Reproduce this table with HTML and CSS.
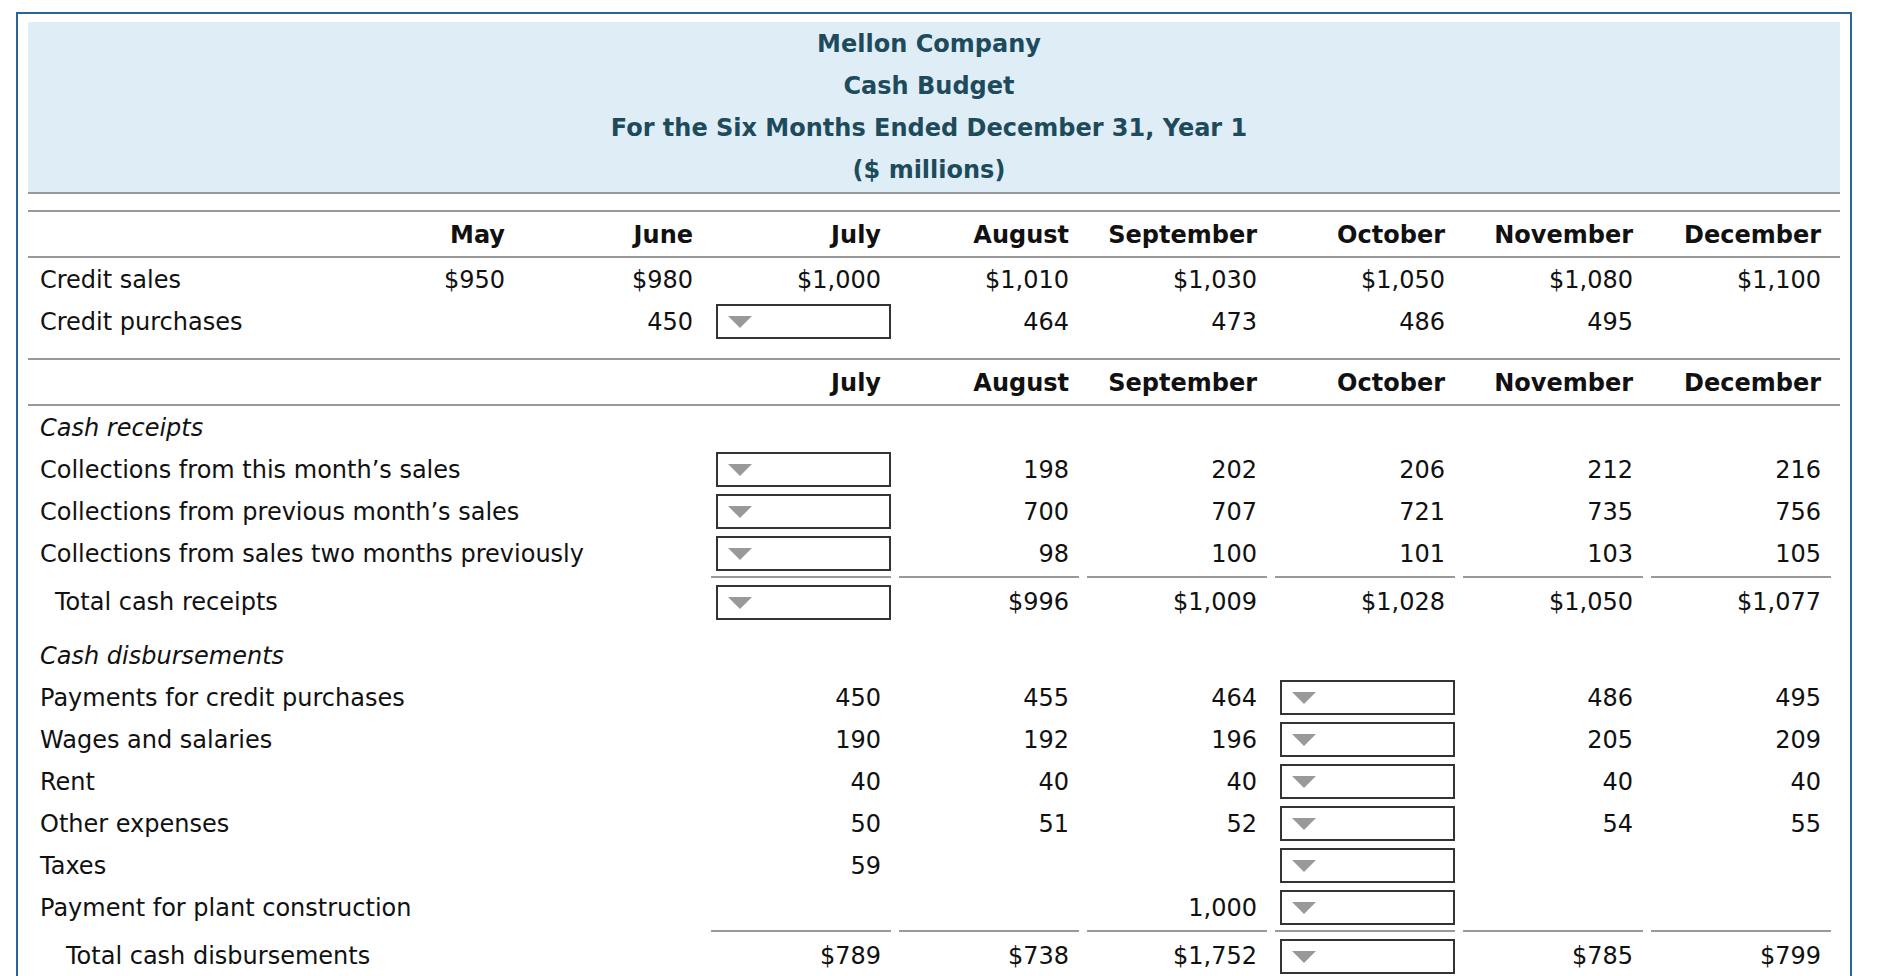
FILE: index.html
```html
<!DOCTYPE html>
<html lang="en">
<head>
<meta charset="utf-8">
<title>Mellon Company Cash Budget</title>
<link rel="stylesheet" href="styles.css">
</head>
<body>
<div class="sheet">
  <div class="title">
    <div>Mellon Company</div>
    <div>Cash Budget</div>
    <div>For the Six Months Ended December 31, Year 1</div>
    <div>($ millions)</div>
  </div>

  <div class="block upper">
    <div class="row head">
      <div class="lbl"></div>
      <div class="c">May</div>
      <div class="c">June</div>
      <div class="c">July</div>
      <div class="c">August</div>
      <div class="c">September</div>
      <div class="c">October</div>
      <div class="c">November</div>
      <div class="c">December</div>
    </div>
    <div class="row">
      <div class="lbl">Credit sales</div>
      <div class="c">$950</div>
      <div class="c">$980</div>
      <div class="c">$1,000</div>
      <div class="c">$1,010</div>
      <div class="c">$1,030</div>
      <div class="c">$1,050</div>
      <div class="c">$1,080</div>
      <div class="c">$1,100</div>
    </div>
    <div class="row">
      <div class="lbl">Credit purchases</div>
      <div class="c"></div>
      <div class="c">450</div>
      <div class="c sel"><div class="dd"></div></div>
      <div class="c">464</div>
      <div class="c">473</div>
      <div class="c">486</div>
      <div class="c">495</div>
      <div class="c"></div>
    </div>
  </div>

  <div class="block lower">
    <div class="row head">
      <div class="lbl"></div>
      <div class="c">July</div>
      <div class="c">August</div>
      <div class="c">September</div>
      <div class="c">October</div>
      <div class="c">November</div>
      <div class="c">December</div>
    </div>

    <div class="row">
      <div class="lbl it">Cash receipts</div>
    </div>
    <div class="row">
      <div class="lbl">Collections from this month’s sales</div>
      <div class="c sel"><div class="dd"></div></div>
      <div class="c">198</div>
      <div class="c">202</div>
      <div class="c">206</div>
      <div class="c">212</div>
      <div class="c">216</div>
    </div>
    <div class="row">
      <div class="lbl">Collections from previous month’s sales</div>
      <div class="c sel"><div class="dd"></div></div>
      <div class="c">700</div>
      <div class="c">707</div>
      <div class="c">721</div>
      <div class="c">735</div>
      <div class="c">756</div>
    </div>
    <div class="row">
      <div class="lbl">Collections from sales two months previously</div>
      <div class="c sel"><div class="dd"></div></div>
      <div class="c">98</div>
      <div class="c">100</div>
      <div class="c">101</div>
      <div class="c">103</div>
      <div class="c">105</div>
    </div>
    <div class="row total">
      <div class="lbl ind1">Total cash receipts</div>
      <div class="c sel"><div class="dd"></div></div>
      <div class="c">$996</div>
      <div class="c">$1,009</div>
      <div class="c">$1,028</div>
      <div class="c">$1,050</div>
      <div class="c">$1,077</div>
    </div>

    <div class="row section">
      <div class="lbl it">Cash disbursements</div>
    </div>
    <div class="row">
      <div class="lbl">Payments for credit purchases</div>
      <div class="c">450</div>
      <div class="c">455</div>
      <div class="c">464</div>
      <div class="c sel"><div class="dd"></div></div>
      <div class="c">486</div>
      <div class="c">495</div>
    </div>
    <div class="row">
      <div class="lbl">Wages and salaries</div>
      <div class="c">190</div>
      <div class="c">192</div>
      <div class="c">196</div>
      <div class="c sel"><div class="dd"></div></div>
      <div class="c">205</div>
      <div class="c">209</div>
    </div>
    <div class="row">
      <div class="lbl">Rent</div>
      <div class="c">40</div>
      <div class="c">40</div>
      <div class="c">40</div>
      <div class="c sel"><div class="dd"></div></div>
      <div class="c">40</div>
      <div class="c">40</div>
    </div>
    <div class="row">
      <div class="lbl">Other expenses</div>
      <div class="c">50</div>
      <div class="c">51</div>
      <div class="c">52</div>
      <div class="c sel"><div class="dd"></div></div>
      <div class="c">54</div>
      <div class="c">55</div>
    </div>
    <div class="row">
      <div class="lbl">Taxes</div>
      <div class="c">59</div>
      <div class="c"></div>
      <div class="c"></div>
      <div class="c sel"><div class="dd"></div></div>
      <div class="c"></div>
      <div class="c"></div>
    </div>
    <div class="row">
      <div class="lbl">Payment for plant construction</div>
      <div class="c"></div>
      <div class="c"></div>
      <div class="c">1,000</div>
      <div class="c sel"><div class="dd"></div></div>
      <div class="c"></div>
      <div class="c"></div>
    </div>
    <div class="row total">
      <div class="lbl ind2">Total cash disbursements</div>
      <div class="c">$789</div>
      <div class="c">$738</div>
      <div class="c">$1,752</div>
      <div class="c sel"><div class="dd"></div></div>
      <div class="c">$785</div>
      <div class="c">$799</div>
    </div>
  </div>
</div>
</body>
</html>
```

FILE: styles.css
```css
html, body {
  margin: 0;
  padding: 0;
  background: #ffffff;
}

body {
  font-family: "DejaVu Sans", Verdana, sans-serif;
  font-size: 24px;
  color: #111111;
}

.sheet {
  margin: 12px 0 0 16px;
  width: 1812px;
  padding: 8px 10px 20px 10px;
  border: 2px solid #2d6496;
}

.title {
  background: #dfeef6;
  border-bottom: 2px solid #999999;
  padding: 1px 10px 1px 0;
  text-align: center;
  font-weight: bold;
  color: #1e4b5c;
  line-height: 42px;
}

.block {
  margin-top: 16px;
}

.row {
  display: grid;
  grid-template-columns: 303px repeat(8, 188px) 1fr;
}

.lower .row {
  grid-template-columns: 679px repeat(6, 188px) 1fr;
}

.row > div {
  box-sizing: border-box;
  height: 42px;
  padding-top: 1px;
  display: flex;
  align-items: center;
  white-space: nowrap;
}

.row.head {
  border-top: 2px solid #999999;
  border-bottom: 2px solid #999999;
  font-weight: bold;
}

.row.head > div {
  height: 44px;
}

.lbl {
  padding-left: 12px;
}

.it {
  font-style: italic;
}

.ind1 {
  padding-left: 27px;
}

.ind2 {
  padding-left: 38px;
}

.c {
  margin: 0 4px;
  padding-right: 10px;
  justify-content: flex-end;
}

.c.sel {
  padding-right: 0;
}

.dd {
  box-sizing: border-box;
  width: 175px;
  height: 35px;
  margin-left: 5px;
  border: 2px solid #333333;
  background: #ffffff;
  display: flex;
  align-items: center;
  padding-left: 10px;
}

.dd::before {
  content: "";
  width: 0;
  height: 0;
  margin-top: 1px;
  border-left: 12px solid transparent;
  border-right: 12px solid transparent;
  border-top: 12px solid #999999;
}

.row.total {
  padding-top: 2px;
}

.row.total > div {
  height: 46px;
  border-top: 2px solid transparent;
  padding-top: 4px;
}

.row.total > .c {
  border-top-color: #999999;
}

.row.section {
  margin-top: 12px;
}
```
